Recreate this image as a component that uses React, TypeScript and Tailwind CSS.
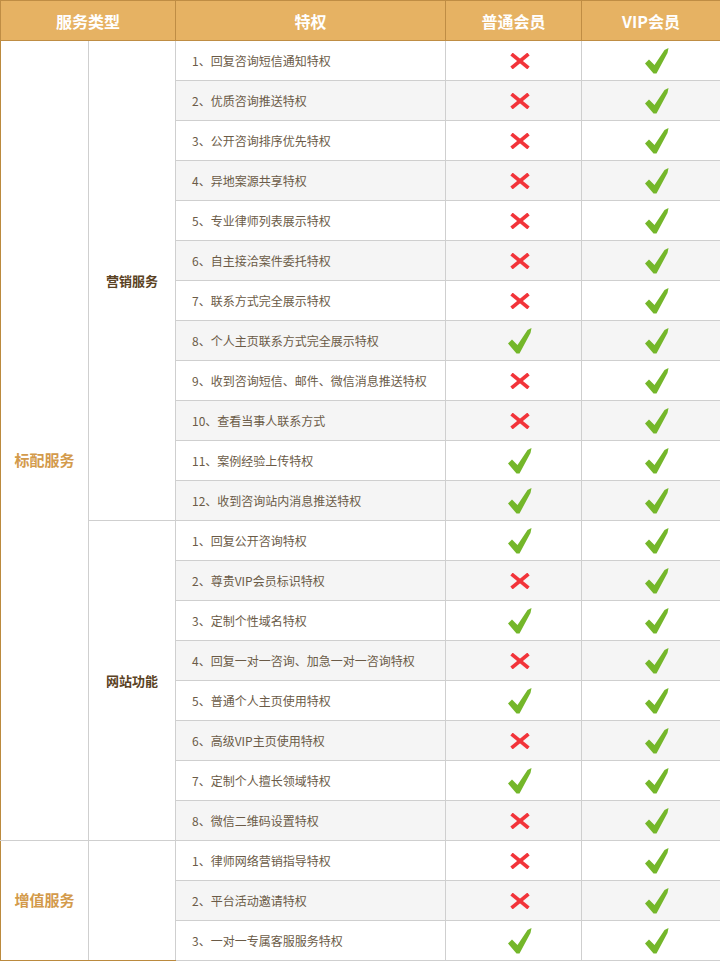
import React from "react";

type Row = { text: string; normal: boolean };

const marketing: Row[] = [
  { text: "1、回复咨询短信通知特权", normal: false },
  { text: "2、优质咨询推送特权", normal: false },
  { text: "3、公开咨询排序优先特权", normal: false },
  { text: "4、异地案源共享特权", normal: false },
  { text: "5、专业律师列表展示特权", normal: false },
  { text: "6、自主接洽案件委托特权", normal: false },
  { text: "7、联系方式完全展示特权", normal: false },
  { text: "8、个人主页联系方式完全展示特权", normal: true },
  { text: "9、收到咨询短信、邮件、微信消息推送特权", normal: false },
  { text: "10、查看当事人联系方式", normal: false },
  { text: "11、案例经验上传特权", normal: true },
  { text: "12、收到咨询站内消息推送特权", normal: true },
];

const website: Row[] = [
  { text: "1、回复公开咨询特权", normal: true },
  { text: "2、尊贵VIP会员标识特权", normal: false },
  { text: "3、定制个性域名特权", normal: true },
  { text: "4、回复一对一咨询、加急一对一咨询特权", normal: false },
  { text: "5、普通个人主页使用特权", normal: true },
  { text: "6、高级VIP主页使用特权", normal: false },
  { text: "7、定制个人擅长领域特权", normal: true },
  { text: "8、微信二维码设置特权", normal: false },
];

const extra: Row[] = [
  { text: "1、律师网络营销指导特权", normal: false },
  { text: "2、平台活动邀请特权", normal: false },
  { text: "3、一对一专属客服服务特权", normal: true },
];

const Check = () => (
  <svg width="24" height="26" viewBox="0 0 24 26" className="inline-block">
    <polygon
      points="0,15.5 4,11.5 9.5,17 19.5,2 23.5,0 22.5,5 11.5,25.5 8.5,25.5"
      fill="#74b72a"
    />
  </svg>
);

const Cross = () => (
  <svg width="20" height="16" viewBox="0 0 20 16" className="inline-block">
    <line x1="1.5" y1="1" x2="18.5" y2="15" stroke="#f2343a" strokeWidth="3.6" />
    <line x1="18.5" y1="1" x2="1.5" y2="15" stroke="#f2343a" strokeWidth="3.6" />
  </svg>
);

const cellBorder = "border border-[#cfcfcf]";

function FeatureCells({ row, index }: { row: Row; index: number }) {
  const bg = index % 2 === 1 ? "bg-[#f5f5f5]" : "bg-white";
  return (
    <>
      <td
        className={`${cellBorder} ${bg} h-[40px] pl-[16px] text-left text-[12px] text-[#6b5b47] whitespace-nowrap`}
      >
        {row.text}
      </td>
      <td className={`${cellBorder} ${bg} text-center align-middle`}>
        <div className="flex items-center justify-center pt-[1px] pl-[12px]">
          {row.normal ? <Check /> : <Cross />}
        </div>
      </td>
      <td className={`${cellBorder} ${bg} text-center align-middle border-r-[#bb8a3e]`}>
        <div className="flex items-center justify-center pt-[1px] pl-[12px]">
          <Check />
        </div>
      </td>
    </>
  );
}

export default function App() {
  let idx = 0;
  const font = {
    fontFamily: "SimSun, 'Noto Sans CJK SC', 'Liberation Sans', sans-serif",
  };
  const rows: React.ReactNode[] = [];

  marketing.forEach((r, i) => {
    const k = idx++;
    rows.push(
      <tr key={`m${i}`}>
        {i === 0 && (
          <td
            rowSpan={marketing.length + website.length}
            className={`${cellBorder} border-l-[#bb8a3e] bg-white pt-[40px] text-center text-[15px] font-bold text-[#d39a4b]`}
          >
            标配服务
          </td>
        )}
        {i === 0 && (
          <td
            rowSpan={marketing.length}
            className={`${cellBorder} bg-white text-center text-[13px] font-bold text-[#5a4223]`}
          >
            营销服务
          </td>
        )}
        <FeatureCells row={r} index={k} />
      </tr>
    );
  });
  website.forEach((r, i) => {
    const k = idx++;
    rows.push(
      <tr key={`w${i}`}>
        {i === 0 && (
          <td
            rowSpan={website.length}
            className={`${cellBorder} bg-white text-center text-[13px] font-bold text-[#5a4223]`}
          >
            网站功能
          </td>
        )}
        <FeatureCells row={r} index={k} />
      </tr>
    );
  });
  extra.forEach((r, i) => {
    const k = idx++;
    rows.push(
      <tr key={`e${i}`}>
        {i === 0 && (
          <td
            rowSpan={extra.length}
            className={`${cellBorder} border-l-[#bb8a3e] border-b-[#bb8a3e] bg-white text-center text-[15px] font-bold text-[#d39a4b]`}
          >
            增值服务
          </td>
        )}
        {i === 0 && (
          <td
            rowSpan={extra.length}
            className={`${cellBorder} border-b-[#bb8a3e] bg-white`}
          ></td>
        )}
        <FeatureCells row={r} index={k} />
      </tr>
    );
  });

  return (
    <div className="w-[720px] bg-white" style={font}>
      <table className="w-[720px] table-fixed border-collapse border border-[#bb8a3e]">
        <colgroup>
          <col className="w-[88px]" />
          <col className="w-[87px]" />
          <col className="w-[270px]" />
          <col className="w-[136px]" />
          <col className="w-[139px]" />
        </colgroup>
        <thead>
          <tr className="h-[40px] bg-[#e6b263]">
            <th
              colSpan={2}
              className="border border-[#bf8d44] text-[16px] font-bold text-white"
              style={{ fontFamily: "'Noto Sans CJK SC', sans-serif" }}
            >
              服务类型
            </th>
            <th
              className="border border-[#bf8d44] text-[16px] font-bold text-white"
              style={{ fontFamily: "'Noto Sans CJK SC', sans-serif" }}
            >
              特权
            </th>
            <th
              className="border border-[#bf8d44] text-[16px] font-bold text-white"
              style={{ fontFamily: "'Noto Sans CJK SC', sans-serif" }}
            >
              普通会员
            </th>
            <th
              className="border border-[#bf8d44] text-[16px] font-bold text-white"
              style={{ fontFamily: "'Noto Sans CJK SC', sans-serif" }}
            >
              VIP会员
            </th>
          </tr>
        </thead>
        <tbody>{rows}</tbody>
      </table>
    </div>
  );
}
